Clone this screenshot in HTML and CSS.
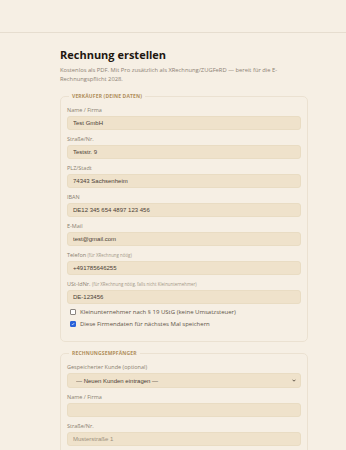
FILE: index.html
```html
<!DOCTYPE html>
<html lang="de">
<head>
  <meta charset="UTF-8">
  <meta name="viewport" content="width=device-width, initial-scale=1.0">
  <title>Rechnung erstellen</title>
  <link rel="stylesheet" href="styles.css">
</head>
<body>

  <header class="topbar"></header>

  <main class="container">
    <h1>Rechnung erstellen</h1>
    <p class="intro">Kostenlos als PDF. Mit Pro zusätzlich als XRechnung/ZUGFeRD — bereit für die E-Rechnungspflicht 2028.</p>

    <!-- Verkäufer -->
    <fieldset class="box">
      <legend>Verkäufer (deine Daten)</legend>

      <label class="field">
        <span class="lbl">Name / Firma</span>
        <input type="text" value="Test GmbH">
      </label>
      <label class="field">
        <span class="lbl">Straße/Nr.</span>
        <input type="text" value="Teststr. 9">
      </label>
      <label class="field">
        <span class="lbl">PLZ/Stadt</span>
        <input type="text" value="74343 Sachsenheim">
      </label>
      <label class="field">
        <span class="lbl">IBAN</span>
        <input type="text" value="DE12 345 654 4897 123 456">
      </label>
      <label class="field">
        <span class="lbl">E-Mail</span>
        <input type="text" value="test@gmail.com">
      </label>
      <label class="field">
        <span class="lbl">Telefon <small>(für XRechnung nötig)</small></span>
        <input type="text" value="+491785646255">
      </label>
      <label class="field">
        <span class="lbl">USt-IdNr. <small>(für XRechnung nötig, falls nicht Kleinunternehmer)</small></span>
        <input type="text" value="DE-123456">
      </label>

      <label class="check">
        <input type="checkbox">
        Kleinunternehmer nach § 19 UStG (keine Umsatzsteuer)
      </label>
      <label class="check">
        <input type="checkbox" checked>
        Diese Firmendaten für nächstes Mal speichern
      </label>
    </fieldset>

    <!-- Empfänger -->
    <fieldset class="box">
      <legend>Rechnungsempfänger</legend>

      <label class="field">
        <span class="lbl">Gespeicherter Kunde (optional)</span>
        <select>
          <option>— Neuen Kunden eintragen —</option>
        </select>
      </label>
      <label class="field">
        <span class="lbl">Name / Firma</span>
        <input type="text" value="">
      </label>
      <label class="field">
        <span class="lbl">Straße/Nr.</span>
        <input type="text" placeholder="Musterstraße 1">
      </label>
    </fieldset>
  </main>

</body>
</html>
```

FILE: styles.css
```css
* {
  box-sizing: border-box;
  margin: 0;
  padding: 0;
}

body {
  font-family: 'Open Sans', 'Noto Sans', sans-serif;
  background-color: #f6efe4;
  color: #2a2118;
}

.topbar {
  height: 33px;
  border-bottom: 1px solid #e6ddcf;
}

.container {
  width: 248px;
  margin: 0 0 0 60px;
  padding-top: 15px;
}

h1 {
  font-size: 11px;
  font-weight: 700;
  color: #1e1710;
  line-height: 14px;
  margin-bottom: 4px;
}

.intro {
  font-size: 5.8px;
  line-height: 9px;
  color: #8d8274;
  margin-bottom: 9px;
}

.box {
  border: 1px solid #ebe1d1;
  border-radius: 5px;
  padding: 2px 6px 13px;
  margin-bottom: 8px;
}

.box legend {
  font-size: 5px;
  font-weight: 700;
  text-transform: uppercase;
  letter-spacing: 0.15px;
  color: #b08e5a;
  padding: 0 3px;
  margin-left: 2px;
}

.field {
  display: flex;
  flex-direction: column;
  margin-top: 4px;
}

.lbl {
  font-size: 5.5px;
  line-height: 10px;
  color: #8a7f70;
}

.lbl small {
  font-size: 4.4px;
  color: #a39887;
}

.field input,
.field select {
  height: 14px;
  margin-top: 1px;
  border: 1px solid #e9dcc3;
  border-radius: 3px;
  background-color: #efe2cb;
  font-family: 'Liberation Sans', Arial, sans-serif;
  font-size: 6px;
  color: #4a4036;
  padding: 0 5px;
  outline: none;
}

.field input::placeholder {
  color: #9c917f;
}

.field select {
  height: 15px;
  padding: 0 10px 0 8px;
  appearance: none;
  background-image: url("data:image/svg+xml,%3Csvg xmlns='http://www.w3.org/2000/svg' viewBox='0 0 4 3'%3E%3Cpath d='M0.5 0.7 L2 2.2 L3.5 0.7' fill='none' stroke='%23433a30' stroke-width='0.8'/%3E%3C/svg%3E");
  background-repeat: no-repeat;
  background-position: right 4px center;
  background-size: 4px 3px;
}

.check {
  display: flex;
  align-items: center;
  gap: 4px;
  font-size: 6px;
  line-height: 8px;
  color: #5f5548;
  margin-top: 4px;
  margin-left: 3px;
}

.field + .check {
  margin-top: 4px;
}

.check input {
  appearance: none;
  width: 6px;
  height: 6px;
  border: 1px solid #8a8580;
  border-radius: 1px;
  background-color: #fff;
}

.check input:checked {
  border-color: #2a62d9;
  background-color: #2a62d9;
  background-image: url("data:image/svg+xml,%3Csvg xmlns='http://www.w3.org/2000/svg' viewBox='0 0 6 6'%3E%3Cpath d='M1.2 3 L2.5 4.3 L4.8 1.6' fill='none' stroke='%23fff' stroke-width='1'/%3E%3C/svg%3E");
  background-size: 100% 100%;
}
```
